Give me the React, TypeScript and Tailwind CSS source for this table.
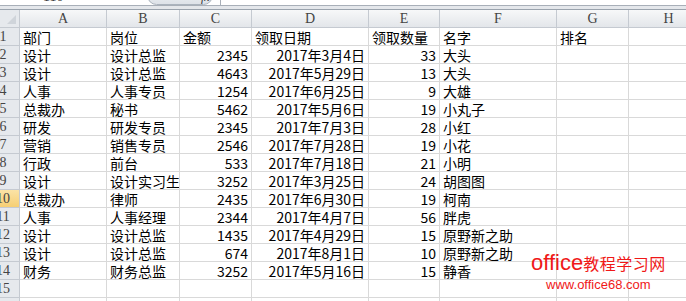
const cols = [
  { key: "A", w: 87 },
  { key: "B", w: 73 },
  { key: "C", w: 72 },
  { key: "D", w: 117 },
  { key: "E", w: 71 },
  { key: "F", w: 117 },
  { key: "G", w: 72 },
  { key: "H", w: 80 },
];

type Row = [string, string, string, string, string, string, string];

const rows: Row[] = [
  ["部门", "岗位", "金额", "领取日期", "领取数量", "名字", "排名"],
  ["设计", "设计总监", "2345", "2017年3月4日", "33", "大头", ""],
  ["设计", "设计总监", "4643", "2017年5月29日", "13", "大头", ""],
  ["人事", "人事专员", "1254", "2017年6月25日", "9", "大雄", ""],
  ["总裁办", "秘书", "5462", "2017年5月6日", "19", "小丸子", ""],
  ["研发", "研发专员", "2345", "2017年7月3日", "28", "小红", ""],
  ["营销", "销售专员", "2546", "2017年7月28日", "19", "小花", ""],
  ["行政", "前台", "533", "2017年7月18日", "21", "小明", ""],
  ["设计", "设计实习生", "3252", "2017年3月25日", "24", "胡图图", ""],
  ["总裁办", "律师", "2435", "2017年6月30日", "19", "柯南", ""],
  ["人事", "人事经理", "2344", "2017年4月7日", "56", "胖虎", ""],
  ["设计", "设计总监", "1435", "2017年4月29日", "15", "原野新之助", ""],
  ["设计", "设计总监", "674", "2017年8月1日", "10", "原野新之助", ""],
  ["财务", "财务总监", "3252", "2017年5月16日", "15", "静香", ""],
  ["", "", "", "", "", "", ""],
  ["", "", "", "", "", "", ""],
];

const cellFont = { fontFamily: '"Noto Sans CJK SC", "Liberation Sans", sans-serif' };
const headFont = { fontFamily: '"Liberation Serif", "Noto Sans CJK SC", serif' };

function RowHeader({ n }: { n: number }) {
  const active = n === 10;
  return (
    <div
      className={`h-[18px] w-[20px] shrink-0 overflow-hidden border-b border-r border-[#c5cad1] ${
        active ? "bg-gradient-to-b from-[#fbe3a6] to-[#f6cf73]" : "bg-[#e6e9ed]"
      }`}
    >
      <div
        className="-ml-[17px] w-[40px] text-center text-[14px] leading-[18px] text-[#444]"
        style={headFont}
      >
        {n}
      </div>
    </div>
  );
}

export default function App() {
  return (
    <div className="relative h-[301px] w-[686px] overflow-hidden bg-white">
      {/* formula bar remnant */}
      <div className="relative h-[10px] border-b border-[#9aa3ad] bg-[#e4e7eb]">
        <div className="flex h-[6px] border-b border-[#a8afb8] bg-white">
          <div className="relative h-full w-[145px] overflow-hidden">
            <span
              className="absolute left-[43px] -top-[10px] text-[14px] leading-[14px] text-[#333]"
              style={headFont}
            >
              110
            </span>
          </div>
          <div className="relative h-full w-[75px] overflow-hidden">
            <div className="absolute -top-[14px] left-[2px] h-[19px] w-[66px] rounded-full border border-[#aab3bd] bg-gradient-to-b from-[#f4f6f8] to-[#dde2e8]" />
            <span
              className="absolute -top-[9px] left-[56px] text-[12px] italic leading-[12px] text-[#333]"
              style={headFont}
            >
              fx
            </span>
          </div>
          <div className="h-full w-px bg-[#a8afb8]" />
        </div>
      </div>

      {/* column header */}
      <div className="flex h-[18px]">
        <div className="relative h-[18px] w-[20px] shrink-0 border-b border-r border-[#c5cad1] bg-[#e6e9ed]">
          <svg className="absolute bottom-[3px] right-[3px]" width="9" height="9" viewBox="0 0 9 9">
            <path d="M9 0 L9 9 L0 9 Z" fill="#cfd4da" />
          </svg>
        </div>
        {cols.map((c) => (
          <div
            key={c.key}
            className="h-[18px] shrink-0 border-b border-r border-[#c5cad1] bg-gradient-to-b from-[#f7f8f9] to-[#e3e6ea] text-center text-[14px] leading-[17px] text-[#444]"
            style={{ ...headFont, width: c.w }}
          >
            {c.key}
          </div>
        ))}
      </div>

      {/* data rows */}
      {rows.map((r, i) => (
        <div key={i} className="flex h-[18px]">
          <RowHeader n={i + 1} />
          {cols.map((c, j) => {
            const v = j < 7 ? r[j] : "";
            const right = i > 0 && (j === 2 || j === 3 || j === 4);
            return (
              <div
                key={c.key}
                className={`h-[18px] shrink-0 overflow-hidden whitespace-nowrap border-b border-r border-[#d9d9d9] text-[14px] leading-[18px] text-black ${
                  right ? "pr-[3px] text-right" : "pl-[3px]"
                }`}
                style={{ ...cellFont, width: c.w }}
              >
                {v}
              </div>
            );
          })}
        </div>
      ))}

      {/* watermark */}
      <div className="pointer-events-none absolute left-[531px] top-[252px] flex flex-col items-center text-[#f01818]">
        <div className="flex items-baseline leading-[22px]">
          <span className="text-[22px]" style={{ fontFamily: '"Liberation Sans", sans-serif' }}>
            office
          </span>
          <span className="text-[16px] tracking-[0.5px]" style={cellFont}>
            教程学习网
          </span>
        </div>
        <div
          className="mt-[4px] text-[13px] leading-[14px]"
          style={{ fontFamily: '"Liberation Sans", sans-serif' }}
        >
          www.office68.com
        </div>
      </div>
    </div>
  );
}
